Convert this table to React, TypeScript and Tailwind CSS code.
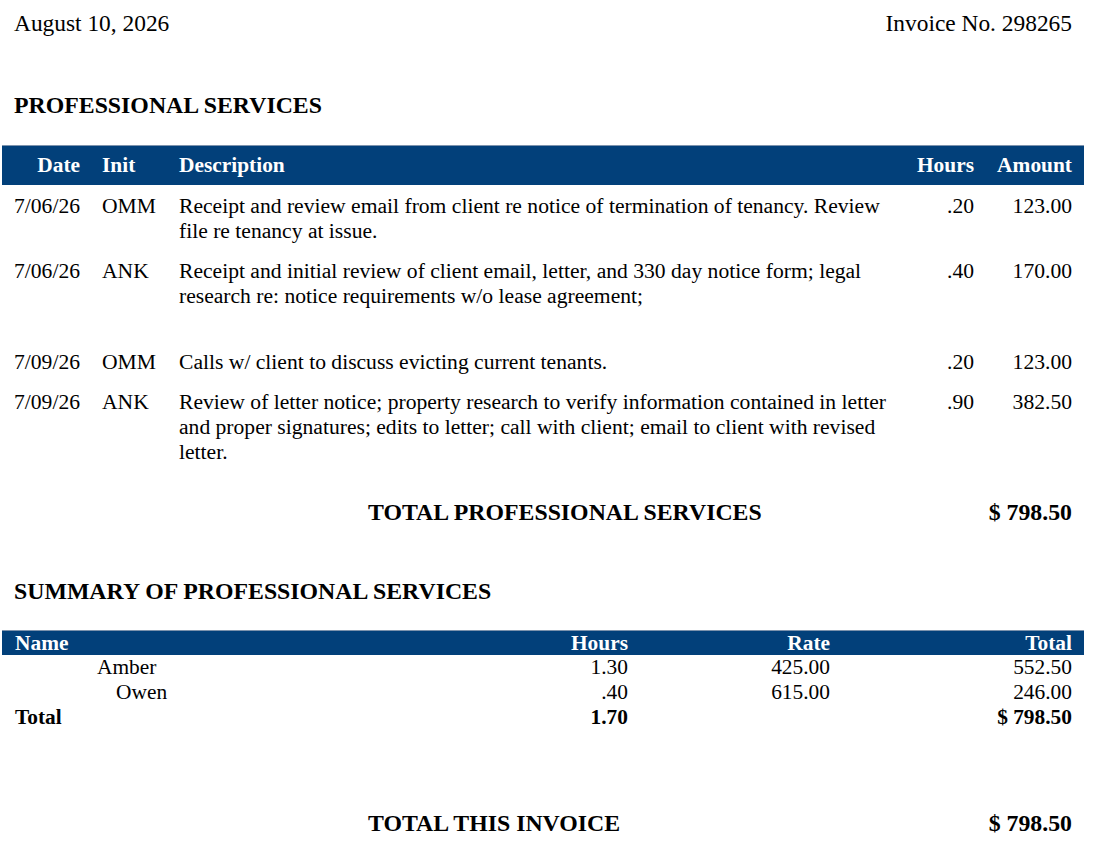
const serif = { fontFamily: '"Liberation Serif", "Times New Roman", serif' }

interface Entry {
  date: string
  init: string
  lines: string[]
  hours: string
  amount: string
}

const entries: Entry[] = [
  {
    date: "7/06/26",
    init: "OMM",
    lines: [
      "Receipt and review email from client re notice of termination of tenancy. Review",
      "file re tenancy at issue.",
    ],
    hours: ".20",
    amount: "123.00",
  },
  {
    date: "7/06/26",
    init: "ANK",
    lines: [
      "Receipt and initial review of client email, letter, and 330 day notice form; legal",
      "research re: notice requirements w/o lease agreement;",
      "",
    ],
    hours: ".40",
    amount: "170.00",
  },
  {
    date: "7/09/26",
    init: "OMM",
    lines: ["Calls w/ client to discuss evicting current tenants."],
    hours: ".20",
    amount: "123.00",
  },
  {
    date: "7/09/26",
    init: "ANK",
    lines: [
      "Review of letter notice; property research to verify information contained in letter",
      "and proper signatures; edits to letter; call with client; email to client with revised",
      "letter.",
    ],
    hours: ".90",
    amount: "382.50",
  },
]

const summary = [
  { name: "Amber", indent: "pl-[83px]", hours: "1.30", rate: "425.00", total: "552.50" },
  { name: "Owen", indent: "pl-[102px]", hours: ".40", rate: "615.00", total: "246.00" },
]

export default function App() {
  return (
    <div className="w-[1101px] h-[848px] bg-white text-black overflow-hidden" style={serif}>
      {/* ================= Top line ================= */}
      <div className="flex justify-between pl-[14px] pr-[29px] pt-[10px] text-[23.4px] leading-[27px]">
        <div>August 10, 2026</div>
        <div>Invoice No. 298265</div>
      </div>

      <div className="pl-[14px] mt-[55px] text-[23.8px] leading-[27px] font-bold">
        PROFESSIONAL SERVICES
      </div>

      {/* ================= Services table ================= */}
      <div className="mx-[2px] w-[1082px] mt-[26px]">
        <div className="flex items-center h-[40px] px-[12px] bg-[#02407a] border-t border-[#7d93ad] text-white font-bold text-[21.4px]">
          <div className="w-[66px] text-right">Date</div>
          <div className="w-[77px] ml-[22px]">Init</div>
          <div className="w-[720px]">Description</div>
          <div className="w-[75px] text-right">Hours</div>
          <div className="flex-1 text-right">Amount</div>
        </div>

        <div className="text-[21.6px] leading-[25px] pt-[1px]">
          {entries.map((e, i) => (
            <div key={i} className="flex px-[12px] py-[7.75px]">
              <div className="w-[66px] text-right">{e.date}</div>
              <div className="w-[77px] ml-[22px]">{e.init}</div>
              <div className="w-[720px]">
                {e.lines.map((l, j) => (
                  <div key={j} className="whitespace-nowrap h-[25px]">
                    {l}
                  </div>
                ))}
              </div>
              <div className="w-[75px] text-right">{e.hours}</div>
              <div className="flex-1 text-right">{e.amount}</div>
            </div>
          ))}
        </div>
      </div>

      <div className="flex pl-[368px] pr-[29px] mt-[26px] text-[23.8px] leading-[27px] font-bold">
        <div className="flex-1">TOTAL PROFESSIONAL SERVICES</div>
        <div>$ 798.50</div>
      </div>

      <div className="pl-[14px] mt-[52px] text-[23.8px] leading-[27px] font-bold">
        SUMMARY OF PROFESSIONAL SERVICES
      </div>

      {/* ================= Summary table ================= */}
      <div className="mx-[2px] w-[1082px] mt-[25px] text-[21.4px] leading-[25px]">
        <div className="flex items-center h-[25px] px-[12px] bg-[#02407a] border-t border-[#7d93ad] text-white font-bold">
          <div className="w-[514px] pl-[1px]">Name</div>
          <div className="w-[100px] text-right">Hours</div>
          <div className="w-[202px] text-right">Rate</div>
          <div className="flex-1 text-right">Total</div>
        </div>

        {summary.map((s) => (
          <div key={s.name} className="flex px-[12px]">
            <div className={`w-[514px] ${s.indent}`}>{s.name}</div>
            <div className="w-[100px] text-right">{s.hours}</div>
            <div className="w-[202px] text-right">{s.rate}</div>
            <div className="flex-1 text-right">{s.total}</div>
          </div>
        ))}

        <div className="flex px-[12px] font-bold">
          <div className="w-[514px] pl-[1px]">Total</div>
          <div className="w-[100px] text-right">1.70</div>
          <div className="w-[202px] text-right"></div>
          <div className="flex-1 text-right">$ 798.50</div>
        </div>
      </div>

      <div className="flex pl-[368px] pr-[29px] mt-[80px] text-[23.8px] leading-[27px] font-bold">
        <div className="flex-1">TOTAL THIS INVOICE</div>
        <div>$ 798.50</div>
      </div>
    </div>
  )
}
